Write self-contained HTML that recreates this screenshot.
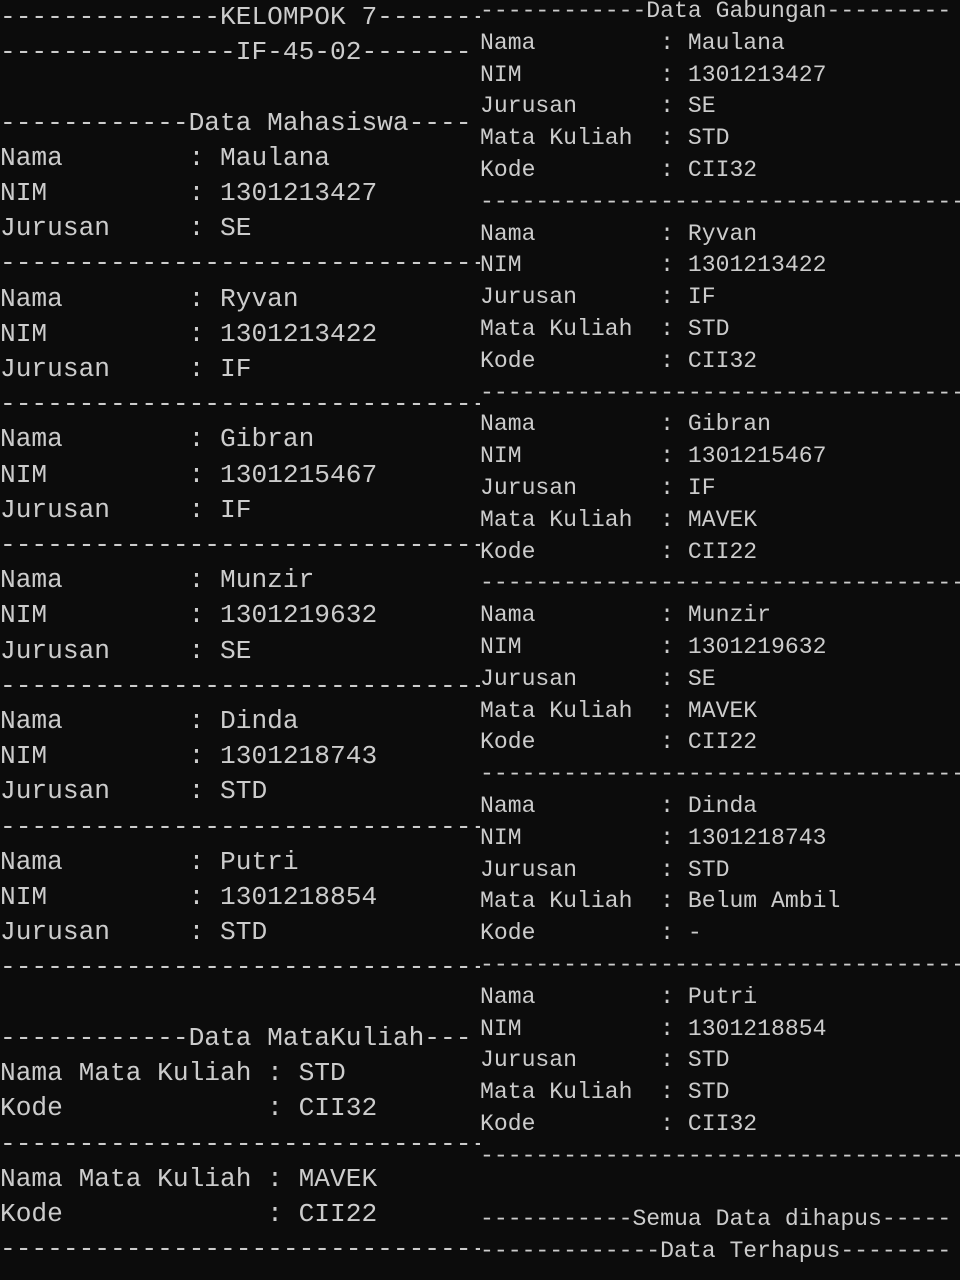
<!DOCTYPE html>
<html><head><meta charset="utf-8"><style>
html,body{margin:0;padding:0;background:#0c0c0c;}
body{width:960px;height:1280px;position:relative;overflow:hidden;}
.col{position:absolute;top:0;height:1280px;overflow:hidden;color:#cccccc;font-family:"Liberation Mono",monospace;white-space:pre;}
#l{left:0;width:480px;font-size:26.2px;line-height:35.2px;top:0px;}
#r{left:480px;width:480px;font-size:23.1px;line-height:31.8px;top:-4px;}
</style></head><body>
<div class="col" id="l">--------------KELOMPOK 7-------
---------------IF-45-02-------

------------Data Mahasiswa----
Nama        : Maulana
NIM         : 1301213427
Jurusan     : SE
-------------------------------
Nama        : Ryvan
NIM         : 1301213422
Jurusan     : IF
-------------------------------
Nama        : Gibran
NIM         : 1301215467
Jurusan     : IF
-------------------------------
Nama        : Munzir
NIM         : 1301219632
Jurusan     : SE
-------------------------------
Nama        : Dinda
NIM         : 1301218743
Jurusan     : STD
-------------------------------
Nama        : Putri
NIM         : 1301218854
Jurusan     : STD
-------------------------------

------------Data MataKuliah---
Nama Mata Kuliah : STD
Kode             : CII32
-------------------------------
Nama Mata Kuliah : MAVEK
Kode             : CII22
-------------------------------</div>
<div class="col" id="r">------------Data Gabungan---------
Nama         : Maulana
NIM          : 1301213427
Jurusan      : SE
Mata Kuliah  : STD
Kode         : CII32
-----------------------------------
Nama         : Ryvan
NIM          : 1301213422
Jurusan      : IF
Mata Kuliah  : STD
Kode         : CII32
-----------------------------------
Nama         : Gibran
NIM          : 1301215467
Jurusan      : IF
Mata Kuliah  : MAVEK
Kode         : CII22
-----------------------------------
Nama         : Munzir
NIM          : 1301219632
Jurusan      : SE
Mata Kuliah  : MAVEK
Kode         : CII22
-----------------------------------
Nama         : Dinda
NIM          : 1301218743
Jurusan      : STD
Mata Kuliah  : Belum Ambil
Kode         : -
-----------------------------------
Nama         : Putri
NIM          : 1301218854
Jurusan      : STD
Mata Kuliah  : STD
Kode         : CII32
-----------------------------------

-----------Semua Data dihapus-----
-------------Data Terhapus--------</div>
</body></html>
